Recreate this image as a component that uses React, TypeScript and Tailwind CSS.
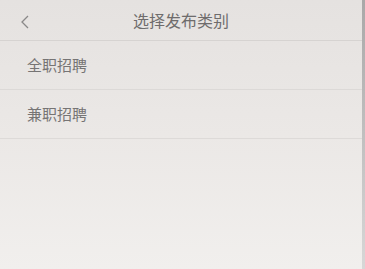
import React from "react";

export default function App() {
  const font = { fontFamily: '"Noto Sans CJK SC", "Noto Sans", sans-serif' };
  return (
    <div
      className="w-[365px] h-[269px] flex bg-gradient-to-b from-[#e5e2e0] via-[#ebe8e6] to-[#f1efed] overflow-hidden"
      style={font}
    >
      <div className="flex-1 flex flex-col">
        <div className="h-[41px] flex items-center relative border-b border-[#d6d3d1]">
          <svg className="absolute left-[20px] top-[14px]" width="10" height="16" viewBox="0 0 10 16">
            <path d="M8 2 L2 8 L8 14" fill="none" stroke="#8a8888" strokeWidth="1.3" />
          </svg>
          <div className="w-full text-center text-[16px] text-[#6e6c6c] leading-none">选择发布类别</div>
        </div>
        <div className="h-[49px] flex items-center pl-[27px] border-b border-[#dcd9d7] text-[15px] text-[#767474]">
          全职招聘
        </div>
        <div className="h-[49px] flex items-center pl-[27px] border-b border-[#dddad8] text-[15px] text-[#767474]">
          兼职招聘
        </div>
      </div>
      <div className="w-[3px] bg-gradient-to-b from-[#a9a8a8] to-[#d8d7d7]" />
    </div>
  );
}
